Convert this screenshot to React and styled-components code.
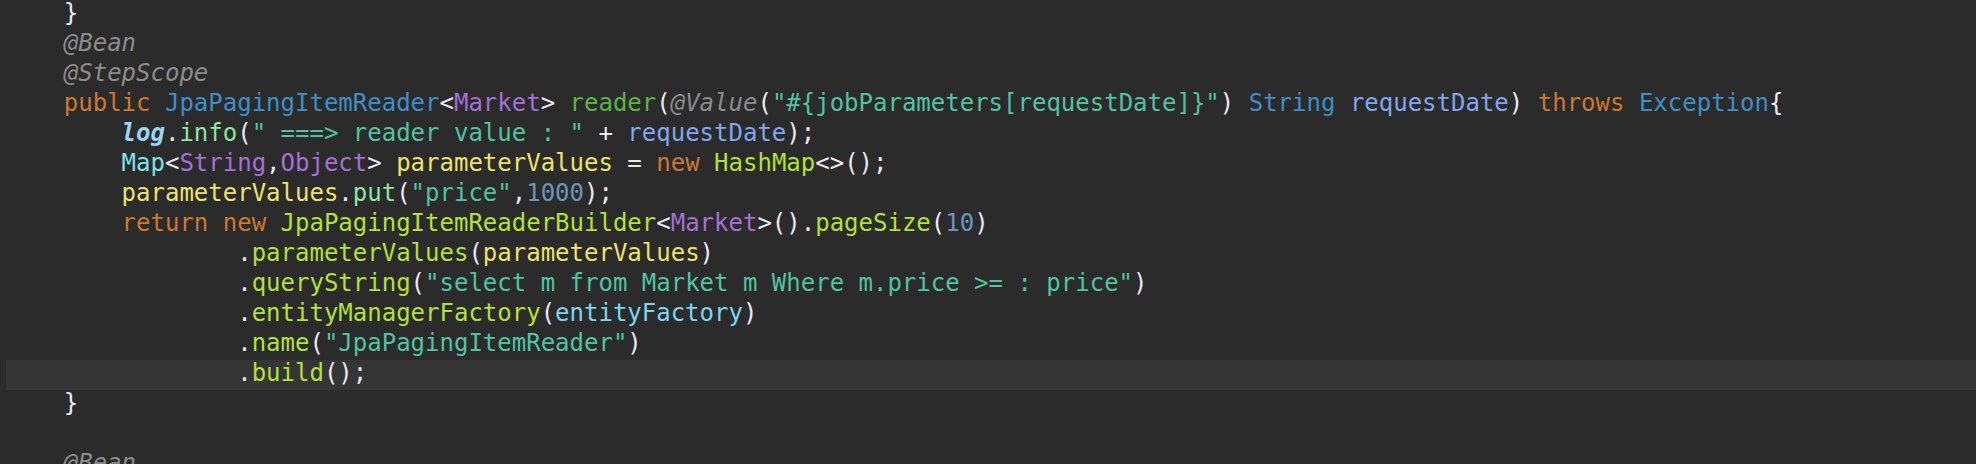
import React from "react";
import styled, { createGlobalStyle } from "styled-components";

const colors = {
  k: "#cc7832",
  t: "#3e8fc6",
  g: "#a66fd6",
  p: "#ebe8f2",
  a: "#8c8c8c",
  m: "#5bb544",
  s: "#50c4a0",
  v: "#80a6f0",
  l: "#9bd4f4",
  f: "#8ee6a0",
  y: "#ece36c",
  c: "#7de3e8",
  b: "#b3e03c",
  n: "#6897bb",
  e: "#7fd4f0",
};

// each line: [indent, [[kind, text], ...], active?]
const lines = [
  [4, [["p", "}"]]],
  [4, [["a", "@Bean"]]],
  [4, [["a", "@StepScope"]]],
  [
    4,
    [
      ["k", "public "],
      ["t", "JpaPagingItemReader"],
      ["p", "<"],
      ["g", "Market"],
      ["p", "> "],
      ["m", "reader"],
      ["p", "("],
      ["a", "@Value"],
      ["p", "("],
      ["s", '"#{jobParameters[requestDate]}"'],
      ["p", ") "],
      ["t", "String "],
      ["v", "requestDate"],
      ["p", ") "],
      ["k", "throws "],
      ["t", "Exception"],
      ["p", "{"],
    ],
  ],
  [
    8,
    [
      ["l", "log"],
      ["p", "."],
      ["f", "info"],
      ["p", "("],
      ["s", '" ===> reader value : "'],
      ["p", " + "],
      ["v", "requestDate"],
      ["p", ");"],
    ],
  ],
  [
    8,
    [
      ["c", "Map"],
      ["p", "<"],
      ["g", "String"],
      ["p", ","],
      ["g", "Object"],
      ["p", "> "],
      ["y", "parameterValues"],
      ["p", " = "],
      ["k", "new "],
      ["b", "HashMap"],
      ["p", "<>();"],
    ],
  ],
  [
    8,
    [
      ["y", "parameterValues"],
      ["p", "."],
      ["f", "put"],
      ["p", "("],
      ["s", '"price"'],
      ["p", ","],
      ["n", "1000"],
      ["p", ");"],
    ],
  ],
  [
    8,
    [
      ["k", "return new "],
      ["b", "JpaPagingItemReaderBuilder"],
      ["p", "<"],
      ["g", "Market"],
      ["p", ">()."],
      ["b", "pageSize"],
      ["p", "("],
      ["n", "10"],
      ["p", ")"],
    ],
  ],
  [
    16,
    [
      ["p", "."],
      ["b", "parameterValues"],
      ["p", "("],
      ["y", "parameterValues"],
      ["p", ")"],
    ],
  ],
  [
    16,
    [
      ["p", "."],
      ["b", "queryString"],
      ["p", "("],
      ["s", '"select m from Market m Where m.price >= : price"'],
      ["p", ")"],
    ],
  ],
  [
    16,
    [
      ["p", "."],
      ["b", "entityManagerFactory"],
      ["p", "("],
      ["e", "entityFactory"],
      ["p", ")"],
    ],
  ],
  [
    16,
    [
      ["p", "."],
      ["b", "name"],
      ["p", "("],
      ["s", '"JpaPagingItemReader"'],
      ["p", ")"],
    ],
  ],
  [16, [["p", "."], ["b", "build"], ["p", "();"]], true],
  [4, [["p", "}"]]],
  [0, []],
  [4, [["a", "@Bean"]]],
];

const App = () => {
  return (
    <>
      <GlobalStyle />
      <Editor>
        {lines.map(([indent, tokens, active], i) => (
          <Line key={i} $active={active}>
            {" ".repeat(indent)}
            {tokens.map(([kind, text], j) => (
              <Tok key={j} $kind={kind}>
                {text}
              </Tok>
            ))}
          </Line>
        ))}
      </Editor>
    </>
  );
};

export default App;

const GlobalStyle = createGlobalStyle`
  html, body {
    margin: 0;
    padding: 0;
    background: #2b2b2b;
    height: 464px;
    overflow: hidden;
  }
`;

const Editor = styled.div`
  background: #2b2b2b;
  height: 464px;
  padding-left: 6px;
  font-family: "DejaVu Sans Mono", "Liberation Mono", monospace;
  font-size: 24px;
  color: #ebe8f2;
  overflow: hidden;
`;

const Line = styled.div`
  height: 26px;
  line-height: 26px;
  padding-bottom: 4px;
  white-space: pre;
  background: ${(p) => (p.$active ? "#353535" : "transparent")};
`;

const Tok = styled.span`
  color: ${(p) => colors[p.$kind]};
  font-style: ${(p) => (p.$kind === "a" || p.$kind === "l" ? "italic" : "normal")};
  font-weight: ${(p) => (p.$kind === "l" ? "bold" : "normal")};
`;
